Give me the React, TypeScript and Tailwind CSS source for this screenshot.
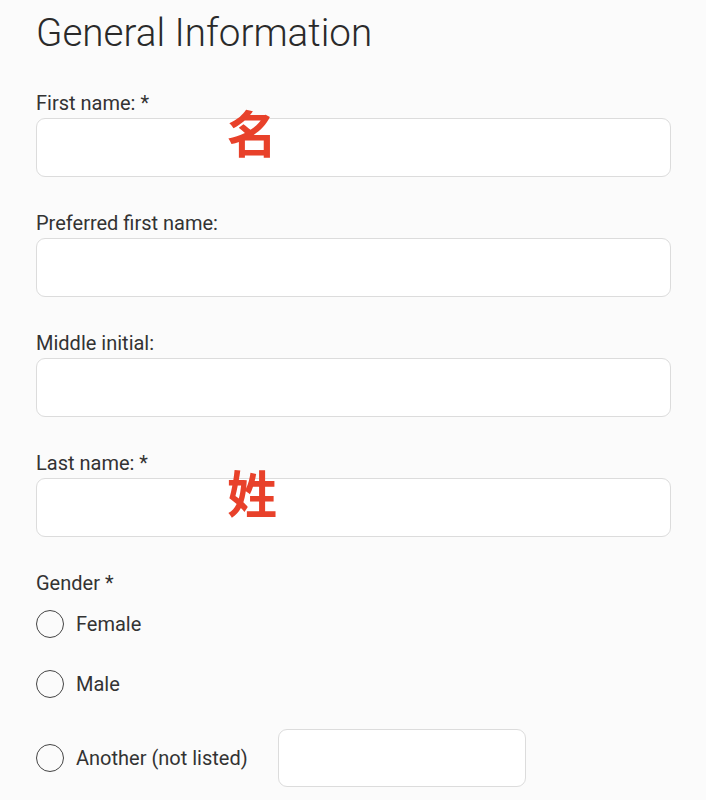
import React from 'react'

const font = { fontFamily: 'Roboto, "Noto Sans CJK SC", sans-serif' }

const Field = ({ label, mark }: { label: string; mark?: string }) => (
  <div className="relative flex flex-col gap-[3px]">
    <label className="text-[20px] leading-[23px] text-[#333]">{label}</label>
    <input className="h-[59px] w-full rounded-[9px] border border-[#dcdcdc] bg-white px-3 outline-none" />
    {mark && (
      <span
        className="pointer-events-none absolute left-[191px] top-[14px] font-['Noto_Sans_CJK_SC',sans-serif] text-[50px] font-bold leading-none text-[#e8412a]"
      >
        {mark}
      </span>
    )}
  </div>
)

const Radio = ({ label }: { label: string }) => (
  <label className="flex items-center gap-[12px] text-[20px] text-[#333]">
    <span className="h-[28px] w-[28px] rounded-full border-[1.5px] border-[#444]" />
    {label}
  </label>
)

export default function App() {
  return (
    <div className="min-h-[800px] bg-[#fbfbfb] pl-[36px] pr-[35px] pt-[10px]" style={font}>
      <h1 className="text-[38.6px] font-light leading-[46px] text-[#2a2a2a]">General Information</h1>
      <div className="mt-[36px] flex flex-col gap-[35px]">
        <Field label="First name: *" mark="名" />
        <Field label="Preferred first name:" />
        <Field label="Middle initial:" />
        <Field label="Last name: *" mark="姓" />
        <div className="flex flex-col">
          <span className="text-[20px] leading-[23px] text-[#333]">Gender *</span>
          <div className="mt-[14px] flex flex-col gap-[30px]">
            <div className="flex h-[30px] items-center">
              <Radio label="Female" />
            </div>
            <div className="flex h-[30px] items-center">
              <Radio label="Male" />
            </div>
            <div className="flex h-[58px] items-center gap-[30px]">
              <Radio label="Another (not listed)" />
              <input className="h-[58px] w-[248px] rounded-[9px] border border-[#dcdcdc] bg-white px-3 outline-none" />
            </div>
          </div>
        </div>
      </div>
    </div>
  )
}
